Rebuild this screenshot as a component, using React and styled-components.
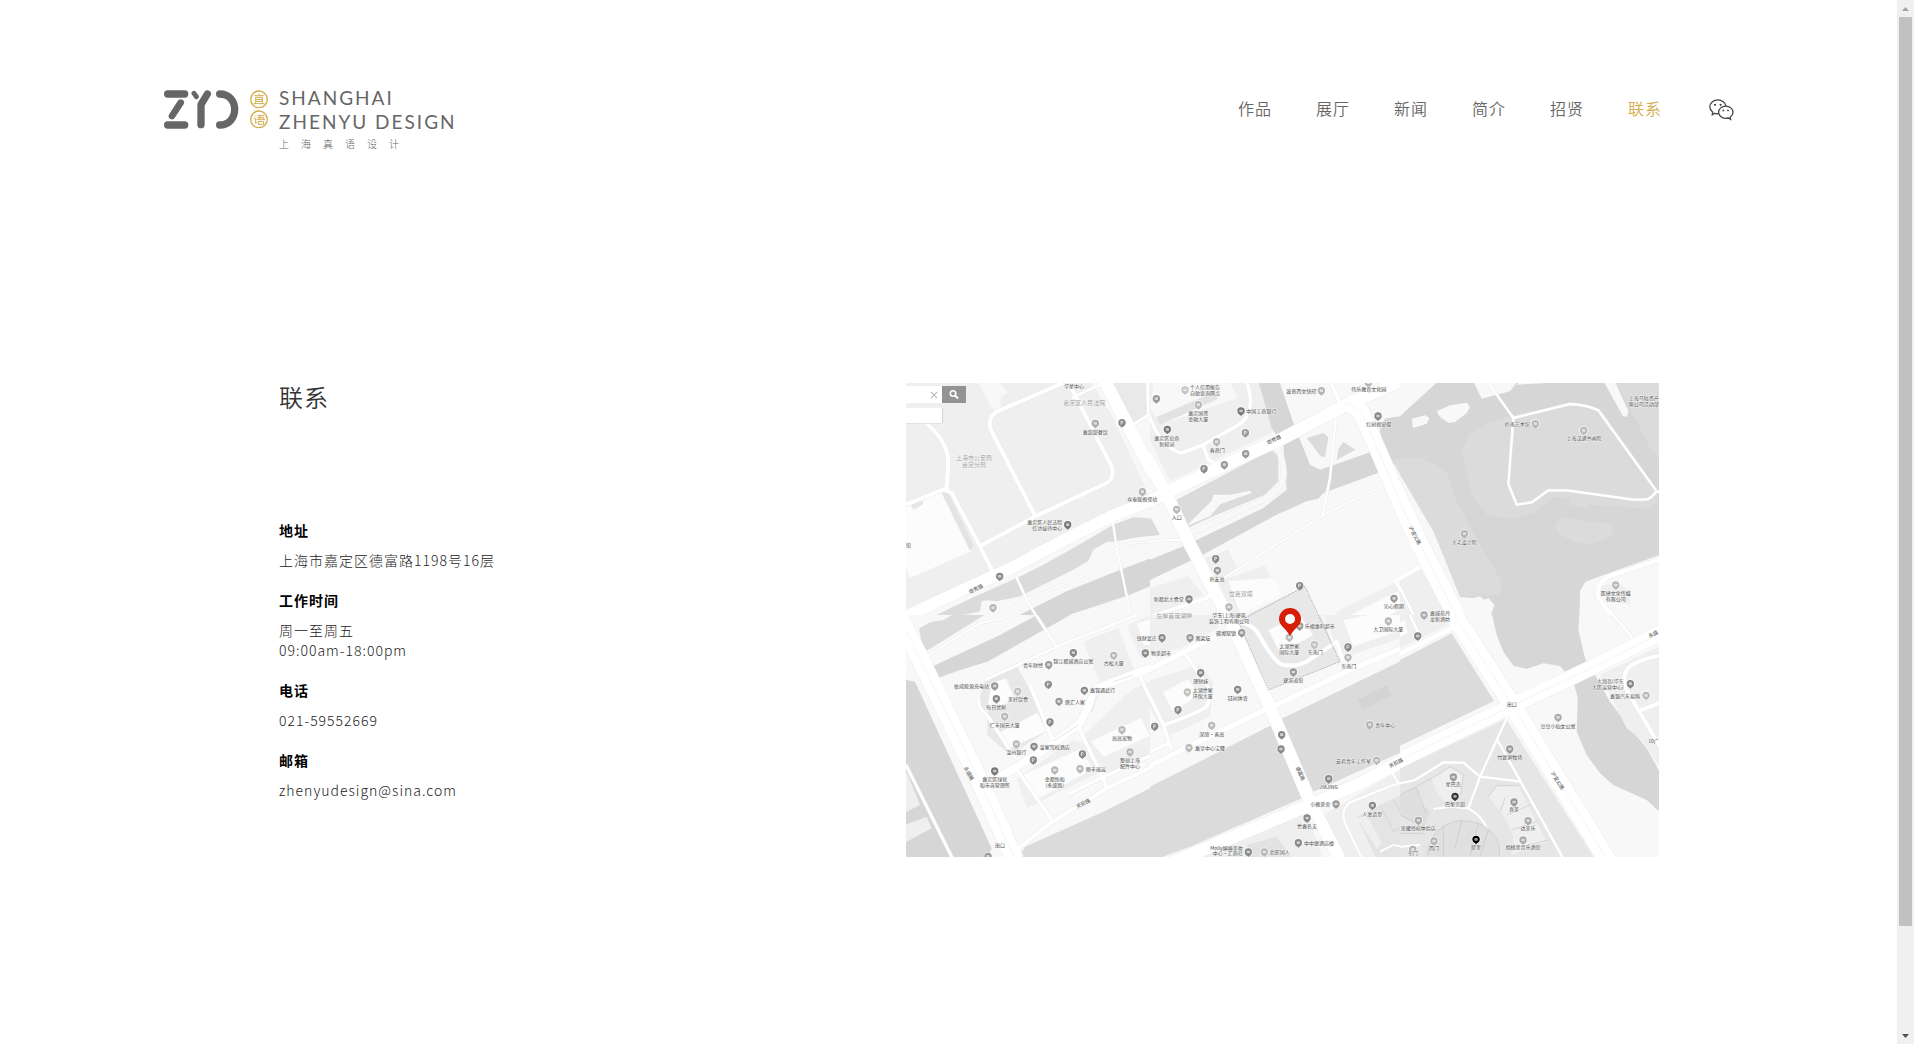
import React, { useState } from "react";
import styled, { createGlobalStyle } from "styled-components";

const GlobalStyle = createGlobalStyle`
  * {
    box-sizing: border-box;
  }
  body {
    margin: 0;
    background: #fff;
    color: #333;
    font-family: "Noto Sans CJK SC", "Noto Sans", sans-serif;
  }
`;

const Shell = styled.div`
  display: flex;
  height: 100vh;
  overflow: hidden;
`;

const Page = styled.div`
  flex: 1;
  min-width: 0;
`;

const Header = styled.header`
  display: flex;
  justify-content: space-between;
  align-items: flex-start;
  padding: 86px 163px 0 164px;
`;

const Brand = styled.a`
  display: flex;
  align-items: flex-start;
  color: #666;
  text-decoration: none;
`;

const BrandMark = styled.svg`
  display: block;
  width: 105px;
  height: 40px;
  margin: 4px 10px 0 0;
`;

const BrandText = styled.span`
  display: flex;
  flex-direction: column;
`;

const BrandName = styled.span`
  font-family: Lato, sans-serif;
  font-size: 19px;
  line-height: 24px;
  letter-spacing: 2px;
  white-space: nowrap;
`;

const BrandSub = styled.span`
  font-size: 10px;
  font-weight: 300;
  line-height: 16px;
  letter-spacing: 12px;
  margin-top: 2px;
`;

const Nav = styled.nav`
  display: flex;
  align-items: center;
  padding-top: 9px;
`;

const NavLink = styled.a`
  padding: 0 22px;
  font-size: 16px;
  font-weight: 350;
  line-height: 24px;
  letter-spacing: 1px;
  text-decoration: none;
  color: ${(props) => (props.$active ? "#d3ad4d" : "#666")};
`;

const WechatButton = styled.button`
  display: block;
  margin: 4px 0 0 25px;
  padding: 0;
  border: 0;
  background: none;
  cursor: pointer;

  svg {
    display: block;
    width: 25px;
    height: 22px;
  }
`;

const Main = styled.main`
  display: flex;
  justify-content: space-between;
  align-items: flex-start;
  padding: 231px 238px 0 279px;
`;

const Title = styled.h1`
  margin: 0 0 109px;
  font-size: 24px;
  font-weight: 350;
  line-height: 28px;
  letter-spacing: 1px;
  color: #333;
`;

const Details = styled.dl`
  margin: 0;
  font-size: 14px;
  line-height: 20px;
  letter-spacing: 1px;
`;

const Label = styled.dt`
  font-weight: 700;
  color: #000;
`;

const Value = styled.dd`
  margin: 10px 0 20px;
  font-weight: 300;
  color: #222;

  a {
    color: inherit;
    text-decoration: none;
  }
`;

const MapBox = styled.figure`
  flex: 0 0 54.57%;
  margin: 0;

  svg {
    display: block;
    width: 100%;
    height: auto;
  }
`;

const MapText = styled.text`
  font-family: "Noto Sans CJK SC", sans-serif;
  font-size: ${(props) => (props.$big ? 18 : 15)}px;
  fill: ${(props) => (props.$big ? "#a0a0a0" : "#4c4c4c")};
  stroke: #fafafa;
  stroke-width: 2px;
  paint-order: stroke;
`;

const ScrollBar = styled.div`
  display: flex;
  flex-direction: column;
  align-items: center;
  width: 17px;
  background: #f0f0f0;
`;

const ScrollArrow = styled.button`
  display: flex;
  justify-content: center;
  align-items: center;
  width: 17px;
  height: 17px;
  padding: 0;
  border: 0;
  background: none;

  svg {
    display: block;
  }
`;

const ScrollTrack = styled.div`
  flex: 1;
  width: 13px;
`;

const ScrollThumb = styled.div`
  height: 90%;
  background: #c1c1c1;
`;

const LAND = "#efefef";
const PALE = "#f8f8f8";
const GREEN = "#dbdbdb";
const WATER = "#d6d6d6";
const HOUSE = "#fcfcfc";
const BLOCK = "#e8e8e8";

// areas: [fill, points], roads: [width, path], pins: [x, y, colour, mark], labels: [x, y, text, anchor, rotate]
const tiles = [
  {
    x: -6,
    y: -5,
    w: 750,
    h: 711,
    base: PALE,
    areas: [
      [LAND, "0,0 780,0 780,350 640,405 480,480 330,560 0,700"],
      [PALE, "235,15 300,15 325,45 345,28 385,70 292,105 272,85"],
      [LAND, "302,58 345,28 370,40 385,72 300,110"],
      [HOUSE, "18,380 125,345 217,518 30,600 18,570"],
      ["#e3e3e3", "125,345 145,345 222,505 210,518"],
      ["#e6e6e6", "33,380 68,366 70,378 40,396"],
      [PALE, "575,15 780,15 780,345 745,348 640,120"],
      ["#e9e9e9", "640,15 740,15 742,110 700,135"],
      [GREEN, "100,715 215,660 350,600 430,560 520,510 640,440 700,418 745,420 775,470 700,480 650,490 620,492 580,515 565,548 520,575 390,640 360,655 290,670 262,667 245,670 240,700 150,720"],
      [WATER, "340,720 500,640 650,580 780,530 780,612 690,650 480,720"],
    ],
    roads: [
      [12, "M80 138 Q145 190 145 255 L140 330 L18 380"],
      [12, "M135 335 L155 345 L240 505 L288 600"],
      [12, "M240 505 L410 413 L620 315 Q645 300 635 265 L530 62 L510 20"],
      [12, "M406 415 L270 150 Q265 115 292 100 L490 15"],
      [8, "M515 60 L600 20 M700 140 L745 110 L742 15 M742 115 L790 205 M745 65 L790 30"],
      [6, "M638 430 L650 510 L690 700 L660 720"],
      [5, "M790 488 L700 495 L650 510 L580 580 L380 665 L280 720"],
      [7, "M348 595 L380 665 L415 725"],
      [36, "M-10 730 L120 667 L330 572 L500 482 L640 412 L800 348"],
      [38, "M612 5 L795 355"],
    ],
    pins: [
      [586, 136, "#aaa"],
      [666, 134, "#888", "P"],
      [727, 341, "#b4b4b4"],
      [503, 440, "#777"],
      [299, 595, "#888"],
      [279, 689, "#b4b4b4"],
    ],
    labels: [
      [522, 31, "华星中心"],
      [553, 82, "嘉定区人民法院", "middle", 0, 1],
      [586, 167, "嘉甜甜餐饮"],
      [222, 245, "上海市公安局", "middle", 0, 1],
      [222, 267, "嘉定分局", "middle", 0, 1],
      [727, 370, "众泰联络驿站"],
      [487, 437, "嘉定区人民法院", "end"],
      [487, 456, "信访接待中心", "end"],
      [230, 638, "塔秀路", "middle", -27],
      [18, 508, "馆", "start"],
    ],
  },
  {
    x: 244,
    y: -5,
    w: 750,
    h: 711,
    base: PALE,
    areas: [
      [LAND, "0,0 330,0 375,160 60,310 0,190"],
      [PALE, "10,15 240,15 262,60 30,140 0,90"],
      ["#e2e2e2", "18,118 185,45 205,62 30,140"],
      [WATER, "325,10 388,10 430,135 480,260 510,275 690,212 710,275 520,345 505,362 470,370 380,410 150,535 0,606 0,545 110,500 340,390 410,335 400,200 365,150"],
      [GREEN, "80,365 365,215 385,235 385,310 345,350 190,415 95,458"],
      [PALE, "108,445 185,368 190,350 240,350 300,338 305,345 212,378 180,415"],
      [GREEN, "470,180 520,165 535,178 525,238 512,235"],
      [GREEN, "580,192 616,215 560,246 565,212"],
      [WATER, "690,155 705,120 750,115 780,100 780,250 705,262"],
      [GREEN, "700,250 740,245 780,245 780,350 735,260"],
      [PALE, "620,0 780,0 780,100 750,113 703,122"],
      [GREEN, "0,415 30,470 0,475"],
      [LAND, "165,540 235,515 265,575 195,610"],
      [LAND, "0,630 115,595 160,650 0,720"],
      [LAND, "205,610 345,563 390,650 245,710"],
      [HOUSE, "235,610 370,600 392,650 270,705"],
      [BLOCK, "290,711 465,625 505,715 290,715"],
      [LAND, "560,700 735,615 780,690 780,720 560,720"],
      [HOUSE, "600,711 745,640 760,690 700,720"],
    ],
    roads: [
      [17, "M372 190 Q412 265 398 310 Q385 345 320 375 L100 475", PALE],
      [11, "M-5 105 Q30 210 95 225 L160 200 L270 138 Q320 100 290 10"],
      [11, "M158 200 L175 245 L205 262"],
      [11, "M535 0 Q560 50 570 80"],
      [7, "M560 95 L540 300 L518 412"],
      [6, "M700 322 L518 412 L225 598 L195 620"],
      [6, "M0 488 L95 485"],
      [11, "M-10 720 L170 660 L195 625"],
      [10, "M800 570 L735 608 L790 700"],
      [38, "M-5 372 L45 345 L400 180 L580 85 L770 0"],
      [50, "M585 70 L632 100 L690 230 L740 350 L800 480"],
      [38, "M-30 200 L50 350 L120 500 L240 730"],
    ],
    pins: [
      [19, 62, "#999"],
      [105, 36, "#c4c4c4"],
      [145, 80, "#b8b8b8"],
      [52, 154, "#777"],
      [273, 99, "#777"],
      [286, 164, "#999", "P"],
      [200, 191, "#b8b8b8"],
      [287, 227, "#999"],
      [223, 260, "#999"],
      [162, 272, "#888", "P"],
      [514, 38, "#b4b4b4"],
      [655, 14, "#b4b4b4"],
      [684, 114, "#888"],
      [80, 394, "#b8b8b8"],
      [197, 542, "#888", "P"],
      [202, 577, "#999"],
      [117, 663, "#888"],
      [449, 623, "#888", "P"],
      [732, 661, "#999"],
      [237, 687, "#b8b8b8"],
    ],
    labels: [
      [120, 32, "个人信用报告", "start"],
      [120, 51, "自助查询网点", "start"],
      [145, 112, "嘉定国资"],
      [145, 130, "金融大厦"],
      [289, 104, "中国工商银行", "start"],
      [50, 186, "嘉定区总商"],
      [50, 203, "新知词"],
      [202, 222, "春燕门"],
      [499, 44, "波普西文快印", "end"],
      [656, 39, "伟乐教育文化园"],
      [686, 144, "红树视觉摄"],
      [374, 190, "塔秀路", "middle", -27],
      [80, 424, "入口"],
      [201, 608, "孙友高"],
      [101, 668, "新都北大食堂", "end"],
      [272, 654, "世嘉双塔", "middle", 0, 1],
      [73, 719, "左岸首席湖畔", "middle", 0, 1],
      [237, 716, "华玉(上海)建筑"],
      [732, 691, "沁心假期"],
    ],
  },
  {
    x: 494,
    y: -5,
    w: 780,
    h: 711,
    base: WATER,
    areas: [
      [GREEN, "0,240 60,240 110,260 140,285 170,370 240,500 305,610 300,650 180,655 60,440 0,300"],
      [GREEN, "265,135 340,110 510,75 605,95 770,335 777,370 740,392 650,385 570,380 560,390 510,380 510,360 460,357 400,405 330,424 260,410 215,350 195,260 183,225 210,165"],
      [GREEN, "640,0 780,0 780,250 745,200 700,110"],
      [GREEN, "463,440 490,418 560,430 640,438 635,475 580,497 530,495 480,470"],
      [PALE, "0,0 125,0 0,115"],
      [PALE, "215,0 360,0 330,40 245,62"],
      [PALE, "350,20 370,0 480,0 440,15"],
      [PALE, "605,0 640,0 685,100 680,117 668,113"],
      [PALE, "36,122 75,112 88,120 80,137 38,150"],
      [PALE, "110,100 150,82 200,74 210,88 200,105 165,132 145,135 118,115"],
      [PALE, "0,290 100,460 180,657 220,660 240,655 252,665 265,660 283,680 270,720 0,720"],
      [LAND, "0,600 62,570 145,720 0,720"],
      [PALE, "795,525 600,595 555,612 540,640 538,720 795,720"],
      [LAND, "600,625 650,612 690,640 690,680 620,670"],
    ],
    roads: [
      [7, "M265 15 L340 120 L510 78 Q560 80 595 97 L770 340 Q750 365 735 365 L700 365 L500 337 L445 337 L395 373 L350 380 L325 318 L340 120 M770 340 L800 345"],
      [14, "M800 538 L640 590 Q595 605 592 645 Q600 680 650 725"],
      [12, "M-5 603 L62 566"],
      [8, "M-5 620 L45 720"],
      [54, "M-60 235 L-10 350 L55 490 L175 725"],
    ],
    pins: [
      [406, 137, "#b8b8b8"],
      [551, 157, "#b8b8b8"],
      [193, 467, "#b4b4b4"],
      [647, 621, "#b8b8b8"],
      [72, 711, "#aaa"],
    ],
    labels: [
      [389, 143, "岭南艺术馆", "end"],
      [552, 187, "上海汉通书画院"],
      [193, 497, "大宅设计院"],
      [776, 65, "上海马陆资产", "end"],
      [776, 83, "限公司活动部", "end"],
      [647, 652, "医捷文化传媒"],
      [647, 670, "有限公司"],
      [40, 475, "沪宜公路", "middle", 62],
      [90, 710, "嘉城花丹", "start"],
    ],
  },
  {
    x: -6,
    y: 232,
    w: 750,
    h: 735,
    base: PALE,
    areas: [
      [WATER, "0,190 45,200 275,700 260,735 0,735"],
      [LAND, "0,470 22,475 60,570 0,600"],
      [LAND, "0,635 80,605 95,640 0,690"],
      [GREEN, "58,40 90,22 130,15 190,-20 270,-10 80,107 65,95"],
      [WATER, "85,160 300,60 420,-5 520,-5 262,140 180,165 112,190"],
      [LAND, "550,80 655,38 705,170 600,200"],
      [LAND, "680,30 780,-10 780,120 720,130"],
      [HOUSE, "710,25 755,12 780,60 780,90 730,90"],
      [BLOCK, "255,195 350,153 400,240 440,350 330,420 262,360 262,300 235,260"],
      [HOUSE, "275,205 318,190 345,255 260,290"],
      [HOUSE, "300,352 412,293 440,348 325,402"],
      [LAND, "350,490 520,375 590,400 600,470 380,580"],
      [HOUSE, "372,478 540,402 580,462 405,556"],
      [LAND, "545,365 700,220 780,190 780,420 620,480"],
      [HOUSE, "572,380 722,308 750,362 612,425"],
      [GREEN, "358,725 375,695 610,590 790,500 790,735 358,735"],
    ],
    roads: [
      [9, "M18 450 L160 735"],
      [6, "M70 130 L240 25 L310 10 L430 -60"],
      [8, "M255 195 L470 95 L800 -35"],
      [8, "M405 -5 L470 95"],
      [10, "M235 250 L238 275 L268 310 L345 430"],
      [12, "M390 210 L458 375"],
      [11, "M352 465 L455 615"],
      [11, "M530 325 L612 495 L620 520"],
      [10, "M718 180 L790 335"],
      [12, "M340 712 L450 625 L620 520 L800 435"],
      [10, "M505 538 L600 490 L800 400"],
      [24, "M285 495 L440 400 L540 325 L590 220 L680 185 L800 140"],
      [4, "M460 378 L535 330 M575 290 L590 240 M640 200 L700 180", "#eee"],
      [54, "M-5 0 L45 100 L240 500 L345 735"],
    ],
    pins: [
      [520, 113, "#888"],
      [641, 121, "#b8b8b8"],
      [736, 114, "#888"],
      [446, 149, "#999"],
      [284, 213, "#999"],
      [353, 229, "#c0c0c0"],
      [289, 251, "#888"],
      [445, 208, "#888", "P"],
      [553, 226, "#888"],
      [477, 259, "#999"],
      [314, 304, "#b8b8b8"],
      [450, 321, "#888", "P"],
      [349, 387, "#b8b8b8"],
      [402, 394, "#888"],
      [400, 435, "#888", "P"],
      [284, 468, "#777"],
      [464, 465, "#b8b8b8"],
      [540, 461, "#b8b8b8"],
      [547, 417, "#888", "P"],
      [666, 344, "#b8b8b8"],
      [690, 411, "#b4b4b4"],
      [764, 334, "#888", "P"],
      [264, 724, "#999"],
    ],
    labels: [
      [520, 145, "锦江都城酒店公寓"],
      [429, 155, "青年财经", "end"],
      [641, 151, "古松大厦"],
      [710, 74, "钱财富庄", "start"],
      [267, 220, "依威能源充电站", "end"],
      [354, 259, "美好饮食"],
      [289, 282, "每日优鲜"],
      [570, 232, "嘉锦通武行", "start"],
      [495, 266, "鼎汇人家", "start"],
      [314, 335, "仁丰国元大厦"],
      [349, 418, "温州银行"],
      [419, 401, "皇家驾校酒店", "start"],
      [284, 499, "嘉定区绿化"],
      [284, 517, "和市容管理所"],
      [464, 498, "金都怡和"],
      [464, 516, "(永盛路)"],
      [557, 468, "顺丰速运", "start"],
      [666, 374, "高高宠物"],
      [690, 442, "整创上海"],
      [690, 460, "配件中心"],
      [552, 570, "天祝路", "middle", -27],
      [202, 478, "永盛路", "middle", 62],
      [300, 696, "出口"],
    ],
  },
  {
    x: 244,
    y: 232,
    w: 750,
    h: 735,
    base: PALE,
    areas: [
      [LAND, "0,0 200,-30 205,40 90,100 0,120"],
      [LAND, "0,195 150,150 190,200 180,305 50,365 0,280"],
      [HOUSE, "38,232 115,192 145,240 70,290"],
      [BLOCK, "265,20 300,-5 510,-5 570,140 355,225"],
      [HOUSE, "355,45 450,0 490,60 390,115"],
      [LAND, "520,0 780,-10 780,60 575,130"],
      [HOUSE, "580,15 680,-5 780,-5 780,35 610,95"],
      [GREEN, "0,515 365,330 460,548 120,695 0,740"],
      [GREEN, "393,312 790,120 790,395 490,530"],
      ["#d4d4d4", "622,255 710,210 725,240 640,283"],
      [LAND, "200,690 470,590 520,735 120,735"],
      ["#e2e2e2", "290,690 380,665 430,735 300,735"],
      [LAND, "520,600 790,440 790,735 590,735"],
      ["#e4e4e4", "620,605 790,520 790,735 680,735"],
      [LAND, "622,610 650,600 695,685 680,700"],
    ],
    roads: [
      [11, "M98 105 L145 175 Q195 225 170 275 Q130 300 40 330"],
      [11, "M-10 225 L40 330 L65 405"],
      [11, "M-10 415 L55 385"],
      [16, "M-10 168 L100 112 L225 50"],
      [12, "M265 22 Q310 25 330 65 Q375 145 400 150 Q440 155 470 140 L560 80 L580 140"],
      [16, "M-10 458 L100 402 L345 285 L600 165 L800 80"],
      [7, "M800 490 L730 510 L600 562 Q570 585 585 625 L640 740 M725 470 L745 505"],
      [38, "M60 745 L480 570 L640 500 L800 415"],
      [38, "M230 -5 L355 265 L480 560 L570 735"],
      [5, "M690 710 L730 690 L790 700"],
      [2, "M690 570 L730 650 L790 620 M730 555 L770 620", "#ccc"],
    ],
    pins: [
      [275, 53, "#999"],
      [36, 68, "#888"],
      [120, 68, "#999"],
      [152, 173, "#888"],
      [112, 231, "#c0c0c0"],
      [84, 284, "#888", "P"],
      [14, 334, "#888", "P"],
      [263, 223, "#888"],
      [185, 331, "#b8b8b8"],
      [117, 398, "#b8b8b8"],
      [395, 359, "#888"],
      [393, 402, "#888"],
      [449, 33, "#999"],
      [418, 67, "#b8b8b8"],
      [493, 89, "#c0c0c0"],
      [594, 96, "#888", "P"],
      [594, 127, "#b8b8b8"],
      [430, 171, "#999"],
      [715, 18, "#b8b8b8"],
      [659, 329, "#b4b4b4"],
      [680, 436, "#b8b8b8"],
      [536, 491, "#888"],
      [558, 567, "#999"],
      [471, 609, "#888"],
      [667, 571, "#888"],
      [445, 683, "#888"],
      [295, 711, "#888"],
      [343, 711, "#b8b8b8"],
    ],
    labels: [
      [237, 25, "装饰工程有限公司"],
      [258, 60, "赣湘窑镇", "end"],
      [136, 75, "湘菜坛", "start"],
      [3, 121, "物美超市", "start"],
      [152, 204, "理财妹"],
      [128, 230, "太湖世家", "start"],
      [128, 248, "环保大厦", "start"],
      [263, 254, "钰树体育"],
      [185, 363, "深颂·善高"],
      [135, 405, "嘉呈中心宝隆", "start"],
      [464, 39, "乐福惠利超市", "start"],
      [418, 98, "太湖世家"],
      [418, 116, "国际大厦"],
      [496, 118, "东南门"],
      [596, 158, "东南门"],
      [430, 202, "建滨道馆"],
      [715, 49, "大卫国际大厦"],
      [676, 336, "青年中心", "start"],
      [663, 443, "云君青年工作室", "end"],
      [740, 449, "天祝路", "middle", -27],
      [446, 478, "德富路", "middle", 66],
      [536, 522, "JIAJING"],
      [541, 574, "小雅茶舍", "end"],
      [471, 640, "世嘉名夫"],
      [667, 602, "人发造型"],
      [462, 690, "中中继酒店楼", "start"],
      [278, 706, "Molly婷婷美妆", "end"],
      [278, 721, "中心·汇商社", "end"],
      [359, 718, "北辰国人", "start"],
    ],
  },
  {
    x: 494,
    y: 232,
    w: 780,
    h: 735,
    base: PALE,
    areas: [
      [LAND, "0,0 120,-5 155,25 0,100"],
      [HOUSE, "0,20 15,15 22,55 0,65"],
      [GREEN, "0,135 155,55 282,258 0,392"],
      [WATER, "275,-5 538,-5 535,45 555,130 585,180 630,260 690,340 740,400 795,500 795,605 740,555 640,510 600,475 560,420 530,350 533,250 520,200 480,153 430,145 380,162 340,152 310,110 290,60"],
      [LAND, "600,180 795,85 795,480 725,375 680,340"],
      ["#e6e6e6", "-5,462 318,312 590,740 -5,740"],
      [LAND, "105,525 95,490 150,455 190,478 180,545 130,560"],
      [LAND, "265,545 290,512 355,512 440,680 335,720 340,665 315,610"],
      ["#dedede", "0,540 50,515 60,560 90,590 70,640 0,600"],
    ],
    roads: [
      [7, "M322 305 L240 485 L205 580 M0 505 L45 495 L130 442 L190 443 L240 485 L362 500 L495 740 M292 375 L362 500"],
      [6, "M100 582 L150 575 L205 580 Q250 605 262 645 M0 695 L60 690 M100 685 Q150 710 210 725"],
      [12, "M800 118 Q700 135 680 165 Q665 190 680 225 L800 430 M712 290 L800 255"],
      [8, "M630 -10 L698 68 M25 -10 L65 75"],
      [14, "M-5 118 L155 40"],
      [46, "M-10 440 L150 362 L330 275 L560 165 L800 45"],
      [54, "M155 -10 L330 260 L625 740"],
      [80, "M325 262 L335 280"],
    ],
    pins: [
      [53, 63, "#888"],
      [474, 307, "#aaa"],
      [329, 402, "#999"],
      [691, 206, "#888"],
      [738, 241, "#b8b8b8"],
      [160, 486, "#999"],
      [165, 544, "#333"],
      [342, 561, "#999"],
      [384, 617, "#aaa"],
      [369, 675, "#aaa"],
      [228, 673, "#000"],
      [55, 616, "#aaa"],
      [102, 678, "#b4b4b4"],
      [38, 703, "#b4b4b4"],
    ],
    labels: [
      [90, 17, "龙新酒坊", "start"],
      [335, 274, "出口"],
      [474, 338, "豆豆小仙女公寓"],
      [329, 433, "竹庭涮牧场"],
      [671, 205, "大润吾(华东", "end"],
      [671, 223, "大区运营中心)", "end"],
      [720, 248, "嘉银汽车易购", "end"],
      [160, 514, "星巴克"],
      [165, 572, "巴黎贝甜"],
      [342, 589, "喜茶"],
      [384, 645, "达美乐"],
      [369, 703, "胡桃里音乐酒馆"],
      [228, 701, "耶里"],
      [55, 645, "荣耀授权体验店"],
      [102, 706, "西门"],
      [38, 720, "东门"],
      [468, 500, "沪宜公路", "middle", 58],
      [762, 62, "永盛", "middle", -27],
      [776, 383, "10广", "end"],
    ],
  },
];

const Pin = ({ x, y, color, mark }) => (
  <g>
    <circle cx={x} cy={y} r="14" fill="#fff" fillOpacity="0.6" />
    <path d={`M${x - 6} ${y + 9} L${x} ${y + 15} L${x + 6} ${y + 9} Z`} fill={color} />
    <circle cx={x} cy={y} r="11" fill={color} />
    {mark === "P" ? (
      <path
        d={`M${x - 3} ${y + 6} V${y - 5} H${x + 1} Q${x + 6} ${y - 2} ${x + 1} ${y + 1} H${x - 3}`}
        fill="none"
        stroke="#fff"
        strokeWidth="2"
      />
    ) : (
      <rect x={x - 5} y={y - 4} width="10" height="8" rx="2" fill="#fff" fillOpacity="0.6" />
    )}
  </g>
);

const StreetMap = () => (
  <svg viewBox="0 0 753 474" role="img" aria-label="德富路1198号">
    <defs>
      {tiles.map((t, i) => (
        <clipPath id={`tile${i}`} key={i}>
          <rect width={t.w} height={t.h} />
        </clipPath>
      ))}
    </defs>
    {tiles.map((t, i) => (
      <g key={i} transform={`translate(${t.x} ${t.y}) scale(${1 / 3})`}>
        <g clipPath={`url(#tile${i})`}>
          <rect width={t.w} height={t.h} fill={t.base} />
          {t.areas.map(([fill, points]) => (
            <polygon key={points} points={points} fill={fill} />
          ))}
          <g fill="none" strokeLinejoin="round">
            {t.roads.map(([width, d]) => (
              <path key={d} d={d} stroke="#e6e6e6" strokeWidth={width + 2} />
            ))}
            {t.roads.map(([width, d, color]) => (
              <path key={d} d={d} stroke={color || "#fff"} strokeWidth={width} />
            ))}
            {t.roads
              .filter(([width]) => width > 40 && width < 60)
              .map(([, d]) => (
                <path key={d} d={d} stroke="#f0f0f0" strokeWidth="2" />
              ))}
          </g>
        </g>
      </g>
    ))}
    <g transform="translate(494 232) scale(0.3333)" fill="none" stroke="#c6c6c6" strokeWidth="2">
      <path d="M82 725 Q85 640 170 618 Q265 610 298 690 L298 725" fill="#e0e0e0" />
      <path d="M130 630 V725 M185 617 L165 700 M235 625 L210 725 M265 645 L240 725" />
      <path d="M0 540 L105 485 L150 455 L190 478 L182 540 M50 518 L75 590 M0 600 L50 625 L75 660 M0 655 H65" />
      <path d="M265 545 L290 512 H355 M315 550 L300 590 M390 570 L320 600 M410 620 L335 645 M445 675 L345 700" />
    </g>
    <g transform="translate(244 -5) scale(0.3333)">
      <path
        d="M265 731 L465 625 L570 851 L355 936 Z"
        fill="none"
        stroke="#999"
        strokeWidth="2"
        strokeDasharray="5 3"
      />
    </g>
    {tiles.map((t, i) => (
      <g key={i} transform={`translate(${t.x} ${t.y}) scale(${1 / 3})`}>
        {t.pins.map(([x, y, color, mark]) => (
          <Pin key={`${x}-${y}`} x={x} y={y} color={color} mark={mark} />
        ))}
        {t.labels.map(([x, y, text, anchor, rotate, big]) => (
          <MapText
            key={`${x}-${y}`}
            x={x}
            y={y}
            $big={big}
            textAnchor={anchor || "middle"}
            transform={rotate ? `rotate(${rotate} ${x} ${y})` : undefined}
          >
            {text}
          </MapText>
        ))}
      </g>
    ))}
    {/* search box */}
    <rect x="0" y="3" width="36" height="17" fill="#fff" />
    <path d="M0 40 H36.5 V25" fill="none" stroke="#d4d4d4" />
    <rect x="0" y="25" width="36" height="15" fill="#fff" />
    <rect x="36" y="3" width="24" height="17" fill="#939393" />
    <path d="M25 9 L31 15 M31 9 L25 15" stroke="#aaa" fill="none" />
    <circle cx="47" cy="10.5" r="2.7" fill="none" stroke="#fff" strokeWidth="1.6" />
    <path d="M49 12.5 L52 15.5" stroke="#fff" strokeWidth="2" />
    <path
      d="M384 253 C379 244 373 243 373 236 A11 11 0 0 1 395 236 C395 243 389 244 384 253 Z"
      fill="#d81e06"
    />
    <circle cx="384" cy="236" r="5" fill="#fafafa" />
  </svg>
);

const Logo = () => (
  <BrandMark viewBox="0 0 315 120" aria-hidden="true">
    <g fill="none" stroke="#666" strokeWidth="22" strokeLinecap="round">
      <path d="M11 12 H62 M11 105 H62" />
      <path d="M50 38 L24 78" strokeWidth="20" />
      <path d="M90 10 L97 20" strokeWidth="15" />
      <path d="M130 12 L111 44 V104" strokeLinejoin="round" />
      <path d="M167 12 C195 12 212 32 212 58 S195 105 167 105" />
    </g>
    <g fill="none" stroke="#d3ad4d" strokeWidth="4">
      <circle cx="285" cy="28" r="25" />
      <circle cx="285" cy="88" r="25" />
      <path d="M271 17 H299 M285 10 V17" strokeWidth="3" />
      <path d="M275 40 V22 H295 V40 M275 28 H295 M275 34 H295 M269 41 H301" strokeWidth="3" />
      <path d="M271 77 L274 80 M269 86 H275 V100 L279 97" strokeWidth="3" />
      <path d="M280 76 H301 M289 76 L286 88 M281 82 H298 V88 M278 88 H303 M283 94 H299 V103 H283 Z" strokeWidth="3" />
    </g>
  </BrandMark>
);

const links = ["作品", "展厅", "新闻", "简介", "招贤", "联系"];

const App = () => {
  const [active, setActive] = useState("联系");

  return (
    <Shell>
      <GlobalStyle />
      <Page>
        <Header>
          <Brand href="#">
            <Logo />
            <BrandText>
              <BrandName>SHANGHAI</BrandName>
              <BrandName>ZHENYU DESIGN</BrandName>
              <BrandSub>上海真语设计</BrandSub>
            </BrandText>
          </Brand>
          <Nav>
            {links.map((link) => (
              <NavLink
                key={link}
                href="#"
                $active={link === active}
                onClick={() => setActive(link)}
              >
                {link}
              </NavLink>
            ))}
            <WechatButton type="button" aria-label="微信">
              <svg viewBox="0 0 25 22" fill="none" stroke="#444" strokeWidth="1.3">
                <path d="M9.5 14.6 C8 14.9 6.8 14.7 5.6 14.3 L3.3 15.8 L3.6 13 C1.8 11.6 0.8 9.8 0.8 7.8 C0.8 3.9 4.4 0.9 8.8 0.9 C13 0.9 16.4 3.6 16.9 7" />
                <path d="M16.8 7.1 C20.8 7.1 24 9.8 24 13.2 C24 15.2 23 16.9 21.3 18 L21.6 20.4 L19.5 19 C18.6 19.2 17.8 19.3 16.8 19.3 C12.8 19.3 9.6 16.6 9.6 13.2 C9.6 9.8 12.8 7.1 16.8 7.1 Z" />
                <g fill="#444" stroke="none">
                  <circle cx="6" cy="5.8" r="1.1" />
                  <circle cx="11.6" cy="5.8" r="1.1" />
                  <circle cx="14.4" cy="11.4" r="0.9" />
                  <circle cx="19" cy="11.4" r="0.9" />
                </g>
              </svg>
            </WechatButton>
          </Nav>
        </Header>
        <Main>
          <section>
            <Title>联系</Title>
            <Details>
              <Label>地址</Label>
              <Value>上海市嘉定区德富路1198号16层</Value>
              <Label>工作时间</Label>
              <Value>
                周一至周五
                <br />
                09:00am-18:00pm
              </Value>
              <Label>电话</Label>
              <Value>021-59552669</Value>
              <Label>邮箱</Label>
              <Value>
                <a href="mailto:zhenyudesign@sina.com">zhenyudesign@sina.com</a>
              </Value>
            </Details>
          </section>
          <MapBox>
            <StreetMap />
          </MapBox>
        </Main>
      </Page>
      <ScrollBar>
        <ScrollArrow type="button" aria-label="向上滚动">
          <svg width="7" height="4" viewBox="0 0 7 4">
            <path d="M0 4 L3.5 0 L7 4 Z" fill="#a3a3a3" />
          </svg>
        </ScrollArrow>
        <ScrollTrack>
          <ScrollThumb />
        </ScrollTrack>
        <ScrollArrow type="button" aria-label="向下滚动">
          <svg width="7" height="4" viewBox="0 0 7 4">
            <path d="M0 0 L3.5 4 L7 0 Z" fill="#505050" />
          </svg>
        </ScrollArrow>
      </ScrollBar>
    </Shell>
  );
};

export default App;
